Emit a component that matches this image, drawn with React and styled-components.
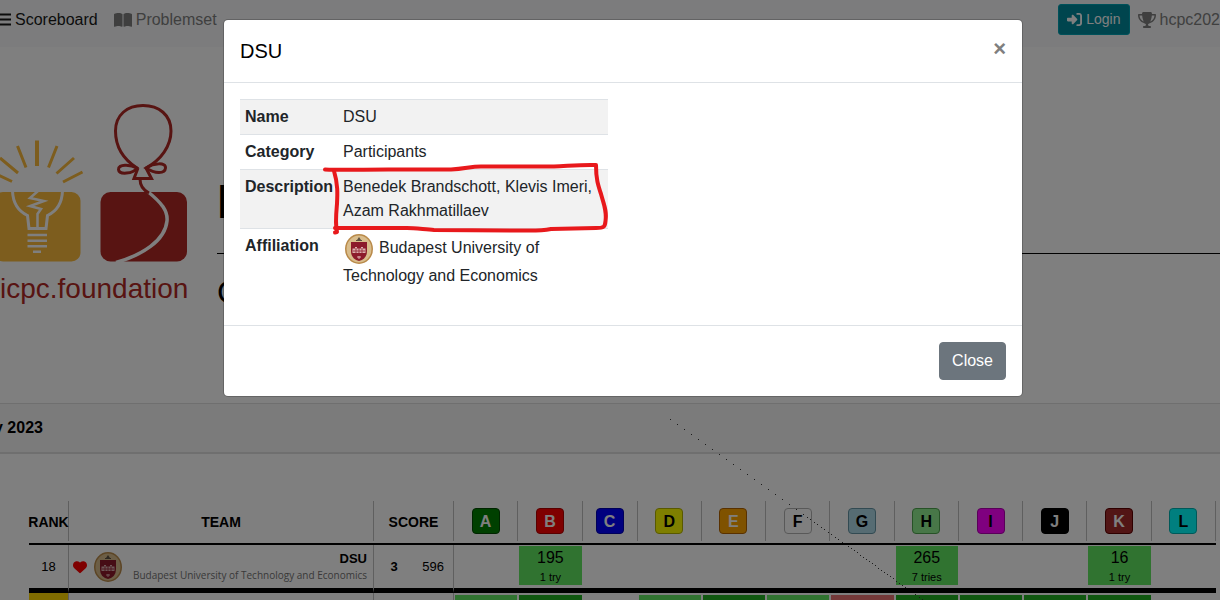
import React from "react";
import styled, { createGlobalStyle } from "styled-components";
import { FaBookOpen, FaRightToBracket, FaTrophy, FaHeart } from "react-icons/fa6";

const GlobalStyle = createGlobalStyle`
  *, *::before, *::after { box-sizing: border-box; }
  body {
    margin: 0;
    overflow: hidden;
    background: #fff;
    color: #000;
    font-family: "Liberation Sans", Arial, sans-serif;
    font-size: 16px;
    line-height: 24px;
  }
`;

const Page = styled.div`
  position: relative;
  height: 100vh;
  overflow: hidden;
`;

/* ---------- navigation ---------- */

const Navbar = styled.nav`
  display: flex;
  align-items: flex-start;
  justify-content: space-between;
  height: 47px;
  padding-top: 4px;
  background: #f8f9fa;
  white-space: nowrap;
`;

const NavGroup = styled.div`
  display: flex;
  align-items: center;
  gap: ${(p) => p.$gap}px;
  height: 31px;
`;

const NavLink = styled.a`
  display: inline-flex;
  align-items: center;
  gap: 4px;
  flex: none;
  color: ${(p) => (p.$active ? "#191919" : "#7f7f7f")};
  text-decoration: none;
  svg { display: block; }
`;

const LoginButton = styled.button`
  display: inline-flex;
  align-items: center;
  flex: none;
  gap: 4px;
  height: 31px;
  padding: 4px 8px;
  border: 1px solid #00a3b5;
  border-radius: 3px;
  background: #008a9c;
  color: #fff;
  font: inherit;
  font-size: 14px;
  line-height: 21px;
`;

/* ---------- banner ---------- */

const Banner = styled.header`
  display: flex;
  height: 356px;
`;

const Logo = styled.div`
  flex: none;
  width: 217px;
  padding-top: 53px;
  svg { display: block; }
`;

const LogoText = styled.div`
  margin-top: 1px;
  color: #b02824;
  font-size: 28px;
  line-height: 32px;
`;

const BannerText = styled.div`
  flex: 1;
  padding-top: 127px;
`;

const BannerTitle = styled.h1`
  margin: 0;
  padding-bottom: 23px;
  border-bottom: 1px solid #000;
  font-size: 48px;
  line-height: 56px;
`;

const BannerSubtitle = styled.div`
  margin-top: 20px;
  font-size: 32px;
  line-height: 36px;
`;

const ContestBar = styled.div`
  height: 51px;
  padding: 12px 0;
  border-top: 1px solid #dfdfdf;
  border-bottom: 2px solid #dfdfdf;
  background: #f7f7f7;
  font-weight: bold;
  text-indent: -6px;
`;

/* ---------- scoreboard ---------- */

const ScoreArea = styled.main`
  padding: 47px 4px 0 29px;
`;

const ScoreTable = styled.table`
  width: 100%;
  table-layout: fixed;
  border-collapse: separate;
  border-spacing: 0;
`;

const Col = styled.col`
  width: ${(p) => (p.$w ? p.$w + "px" : "auto")};
`;

const HeadCell = styled.th`
  padding: 0 0 2px;
  border-bottom: 2px solid #000;
  font-size: 14px;
`;

const HeadLabel = styled.div`
  display: flex;
  align-items: center;
  justify-content: center;
  height: 40px;
  padding-top: 2px;
  border-right: 1px solid #bfbfbf;
  white-space: nowrap;
`;

const HeadProblem = styled(HeadLabel)`
  padding-top: 0;
`;

const ProblemBadge = styled.span`
  width: 28px;
  height: 26px;
  border: 1px solid ${(p) => p.$edge};
  border-radius: 4px;
  background: ${(p) => p.$fill};
  color: ${(p) => p.$ink};
  font-size: 16px;
  line-height: 25px;
  text-align: center;
`;

const Cell = styled.td`
  height: ${(p) => (p.$last ? 43 : 48)}px;
  padding: ${(p) => p.$pad || "0"};
  border-bottom: ${(p) => (p.$last ? "0" : "5px solid #000")};
  border-right: ${(p) => (p.$line ? "1px solid #bfbfbf" : "0")};
  background: ${(p) => p.$fill || "transparent"};
  font-size: ${(p) => p.$size || 13}px;
  font-weight: ${(p) => (p.$bold ? "bold" : "normal")};
  text-align: ${(p) => p.$align || "center"};
  vertical-align: ${(p) => (p.$last ? "top" : "middle")};
`;

const Team = styled.div`
  display: flex;
  align-items: center;
  padding: 0 6px 0 4px;
  svg { display: block; flex: none; }
`;

const TeamCrest = styled.span`
  margin-left: 6px;
`;

const TeamText = styled.div`
  flex: 1;
  text-align: right;
  white-space: nowrap;
`;

const TeamName = styled.div`
  font-size: 13px;
  font-weight: bold;
  line-height: 16px;
`;

const TeamSchool = styled.div`
  color: #737373;
  font-family: "Open Sans", "Liberation Sans", sans-serif;
  font-size: 10px;
  line-height: 16px;
`;

const Result = styled.div`
  height: 39px;
  margin: ${(p) => (p.$last ? "2px 1px 0" : "0 1px 2px")};
  background: ${(p) => p.$fill};
  color: #000;
  font-size: 16px;
  line-height: 23px;
`;

const Tries = styled.div`
  font-size: 11px;
  line-height: 16px;
`;

const DottedTrail = styled.svg`
  position: absolute;
  left: 0;
  top: 0;
`;

/* ---------- dialog ---------- */

const Backdrop = styled.div`
  position: absolute;
  inset: 0;
  padding: 19px 0 0 26px;
  background: rgba(0, 0, 0, 0.5);
`;

const Dialog = styled.section`
  max-width: 800px;
  margin: 0 auto;
  border: 1px solid rgba(0, 0, 0, 0.2);
  border-radius: 5px;
  background: #fff;
  background-clip: padding-box;
  color: #212529;
`;

const DialogHeader = styled.div`
  display: flex;
  align-items: flex-start;
  justify-content: space-between;
  padding: 16px;
  border-bottom: 1px solid #dee2e6;
`;

const DialogTitle = styled.h2`
  margin: 0;
  color: #000;
  font-size: 20px;
  font-weight: normal;
  line-height: 30px;
`;

const DismissButton = styled.button`
  padding: 0;
  border: 0;
  background: none;
  color: #7f7f7f;
  font: inherit;
  font-size: 22px;
  font-weight: bold;
  line-height: 26px;
`;

const DialogBody = styled.div`
  padding: 16px;
`;

const Details = styled.div`
  position: relative;
  width: 48%;
  padding-bottom: 16px;
`;

const DetailTable = styled.table`
  width: 100%;
  border-collapse: collapse;

  tr:nth-child(odd) { background: #f2f2f2; }
  th, td {
    padding: 5px;
    border-top: 1px solid #dee2e6;
    text-align: left;
    vertical-align: top;
  }
  th { width: 98px; }
  td svg { width: 32px; height: 30px; margin-right: 4px; vertical-align: middle; }
`;

const Marking = styled.svg`
  position: absolute;
  left: 0;
  top: 0;
  overflow: visible;
  pointer-events: none;
`;

const DialogFooter = styled.div`
  display: flex;
  justify-content: flex-end;
  padding: 16px;
  border-top: 1px solid #dee2e6;
`;

const CloseButton = styled.button`
  height: 38px;
  padding: 6px 12px;
  border: 1px solid #6c757d;
  border-radius: 4px;
  background: #6c757d;
  color: #fff;
  font: inherit;
`;

/* ---------- drawings ---------- */

const Crest = () => (
  <svg width="30" height="30" viewBox="0 0 30 30" aria-hidden="true">
    <ellipse cx="15" cy="15" rx="14" ry="15" fill="#b98a4a" />
    <ellipse cx="15" cy="15" rx="12.500" ry="13.500" fill="#d9bd8c" />
    <path d="M7 8H23V17Q23 25 15 27Q7 25 7 17Z" fill="#8c1a2b" />
    <path d="M8.500 19V14.500H11V13H13V14.500H17V13H19V14.500H21.500V19Z" fill="#dcb0ae" />
    <path d="M9 17H21M12 14V19M15 14V19M18 14V19" stroke="#9b3442" strokeWidth="1" />
    <path d="M13 23H17M15 22V25" stroke="#dcb0ae" />
    <path d="M13 6L15 3L17 6Z" fill="#5d5140" />
    <path d="M12 6.500H18" stroke="#5d5140" />
  </svg>
);

const FoundationLogo = () => (
  <svg width="190" height="172" viewBox="0 100 190 172" fill="none" aria-hidden="true">
    <rect x="-6" y="192" width="86.500" height="69.500" rx="9" fill="#fbba3c" />
    <g stroke="#fbba3c" strokeWidth="3">
      <path d="M37 140.500V166" strokeWidth="4" />
      <path d="M17.500 146L26 167.500M57 146L48.500 167.500M0 158L18 173M74 158L56.500 173.500M-2 175L12 181.500M82.500 172L63 182" />
    </g>
    <g stroke="#fff" strokeWidth="3">
      <path d="M12.500 191C13 204 18 211 27.500 215.500L29 228.500H46L47.500 215.500C57 211 62 204 62.500 191" />
      <path d="M37.500 229V214L41 209L30 206L44 201L30 198L38 191" strokeWidth="2.500" />
      <path d="M27.500 235H47M27.500 240.700H47M27.500 246.300H47M33 251.700H41" strokeWidth="2.600" />
    </g>
    <rect x="100.500" y="192" width="86.500" height="69.500" rx="10" fill="#b02824" />
    <path d="M147 191C162 203 168 211 167 221C165 241 142 255 116 262.500" stroke="#fff" strokeWidth="3.500" />
    <g stroke="#b02824" strokeWidth="3">
      <path d="M137 168C123 159 115.500 146 115.500 131C115.500 115 127 105.500 143 105.500C159 105.500 171 115 171 131C171 146 161 160 146 168" />
      <path d="M137 168C130 164 118 164 118.500 169.500C119 175 133 174 137 168Z" />
      <path d="M146 168C154 163 166 162 165.500 168C165 174 155 174 146 168Z" />
      <path d="M138 168L134 178.500H151.500L146 168" />
      <path d="M140 179C140 185 143 190 149 193" />
    </g>
  </svg>
);

const MenuIcon = () => (
  <svg width="11" height="13" viewBox="0 0 11 13" aria-hidden="true">
    <path d="M0 1.500H11M0 6.500H11M0 11.500H11" stroke="currentColor" strokeWidth="2" />
  </svg>
);

const trail = [
  { x: 670, y: 419, dx: 7, dy: 5, n: 19 },
  { x: 803, y: 514, dx: 3.5, dy: 2.5, n: 12 },
  { x: 848, y: 546, dx: 3, dy: 2.16, n: 20 },
  { x: 915, y: 594, dx: 3.5, dy: 2.5, n: 3 },
].flatMap((s) =>
  Array.from({ length: s.n }, (_, i) => [Math.round(s.x + i * s.dx), Math.round(s.y + i * s.dy)])
);

/* ---------- data ---------- */

const SOLVED = "#60e760";
const FIRST = "#20ae20";
const WRONG = "#e87272";

const problems = [
  { id: "A", fill: "#008000", edge: "#004a00", ink: "#fff", below: SOLVED },
  { id: "B", fill: "#ff0000", edge: "#b30000", ink: "#fff", time: 195, tries: "1 try", below: FIRST },
  { id: "C", fill: "#0000ff", edge: "#0000b3", ink: "#fff", width: 55 },
  { id: "D", fill: "#ffff00", edge: "#b3b300", ink: "#000", below: SOLVED },
  { id: "E", fill: "#ffa500", edge: "#b36300", ink: "#fff", below: FIRST },
  { id: "F", fill: "#ffffff", edge: "#b3b3b3", ink: "#000", below: SOLVED },
  { id: "G", fill: "#add8e6", edge: "#6494a4", ink: "#000", below: WRONG },
  { id: "H", fill: "#90ee90", edge: "#4fa44f", ink: "#000", time: 265, tries: "7 tries", below: FIRST },
  { id: "I", fill: "#ff00ff", edge: "#b300b3", ink: "#000", below: FIRST },
  { id: "J", fill: "#000000", edge: "#000000", ink: "#fff", below: FIRST },
  { id: "K", fill: "#a52a2a", edge: "#5c0000", ink: "#fff", time: 16, tries: "1 try", below: FIRST },
  { id: "L", fill: "#00ffff", edge: "#00b3b3", ink: "#000" },
];

export default function App() {
  return (
    <Page>
      <GlobalStyle />
      <Navbar>
        <NavGroup $gap={16}>
          <NavLink href="#scoreboard" $active><MenuIcon />Scoreboard</NavLink>
          <NavLink href="#problemset"><FaBookOpen size={18} />Problemset</NavLink>
        </NavGroup>
        <NavGroup $gap={8}>
          <LoginButton type="button"><FaRightToBracket size={15} />Login</LoginButton>
          <NavLink href="#contest"><FaTrophy size={18} />hcpc202</NavLink>
        </NavGroup>
      </Navbar>

      <Banner>
        <Logo>
          <FoundationLogo />
          <LogoText>icpc.foundation</LogoText>
        </Logo>
        <BannerText>
          <BannerTitle>H</BannerTitle>
          <BannerSubtitle>C</BannerSubtitle>
        </BannerText>
      </Banner>

      <ContestBar>y 2023</ContestBar>

      <ScoreArea>
        <ScoreTable>
          <colgroup>
            <Col $w={40} />
            <Col $w={305} />
            <Col $w={40} />
            <Col $w={40} />
            {problems.map((p) => <Col key={p.id} $w={p.width} />)}
          </colgroup>
          <thead>
            <tr>
              <HeadCell><HeadLabel>RANK</HeadLabel></HeadCell>
              <HeadCell><HeadLabel>TEAM</HeadLabel></HeadCell>
              <HeadCell colSpan={2}><HeadLabel>SCORE</HeadLabel></HeadCell>
              {problems.map((p) => (
                <HeadCell key={p.id}>
                  <HeadProblem>
                    <ProblemBadge $fill={p.fill} $edge={p.edge} $ink={p.ink}>{p.id}</ProblemBadge>
                  </HeadProblem>
                </HeadCell>
              ))}
            </tr>
          </thead>
          <tbody>
            <tr>
              <Cell $line>18</Cell>
              <Cell $line>
                <Team>
                  <FaHeart size={14} color="#ff0000" />
                  <TeamCrest><Crest /></TeamCrest>
                  <TeamText>
                    <TeamName>DSU</TeamName>
                    <TeamSchool>Budapest University of Technology and Economics</TeamSchool>
                  </TeamText>
                </Team>
              </Cell>
              <Cell $bold>3</Cell>
              <Cell $line $align="right" $pad="0 9px 0 0">596</Cell>
              {problems.map((p) => (
                <Cell key={p.id}>
                  {p.time && <Result $fill={SOLVED}>{p.time}<Tries>{p.tries}</Tries></Result>}
                </Cell>
              ))}
            </tr>
            <tr>
              <Cell $last $line $fill="#ffd700" />
              <Cell $last $line />
              <Cell $last />
              <Cell $last $line />
              {problems.map((p) => (
                <Cell key={p.id} $last>{p.below && <Result $last $fill={p.below} />}</Cell>
              ))}
            </tr>
          </tbody>
        </ScoreTable>
      </ScoreArea>

      <Backdrop>
        <Dialog role="dialog" aria-labelledby="team-title">
          <DialogHeader>
            <DialogTitle id="team-title">DSU</DialogTitle>
            <DismissButton type="button" aria-label="Close">×</DismissButton>
          </DialogHeader>
          <DialogBody>
            <Details>
              <DetailTable>
                <tbody>
                  <tr><th scope="row">Name</th><td>DSU</td></tr>
                  <tr><th scope="row">Category</th><td>Participants</td></tr>
                  <tr>
                    <th scope="row">Description</th>
                    <td>Benedek Brandschott, Klevis Imeri, Azam Rakhmatillaev</td>
                  </tr>
                  <tr>
                    <th scope="row">Affiliation</th>
                    <td><Crest />Budapest University of Technology and Economics</td>
                  </tr>
                </tbody>
              </DetailTable>
              <Marking width="368" height="140" viewBox="0 0 368 140" fill="none" aria-hidden="true">
                <g stroke="#e8191c" strokeWidth="4" strokeLinecap="round" strokeLinejoin="round">
                  <path d="M85 70.500C110 71.500 130 70 160 70.500L211 70.500C225 70 230 67.500 241 67.500L314 67.500C328 67 340 65.500 356 66C356 80 358 86 361 95C364 106 367 112 365.500 122C365 128 364 129 356 129L311 130C300 132 290 131.500 284 131.500L194 131C185 130.500 175 129 167 129L95 129" />
                  <path d="M94 72C98 85 97.500 95 97 105C96 116 95 125 97 133L95 133.500" />
                </g>
              </Marking>
            </Details>
          </DialogBody>
          <DialogFooter>
            <CloseButton type="button">Close</CloseButton>
          </DialogFooter>
        </Dialog>
      </Backdrop>

      <DottedTrail width="930" height="600" viewBox="0 0 930 600" aria-hidden="true">
        {trail.map(([x, y]) => <rect key={`${x}-${y}`} x={x} y={y} width="1" height="1" fill="#1c1c1c" />)}
      </DottedTrail>
    </Page>
  );
}
